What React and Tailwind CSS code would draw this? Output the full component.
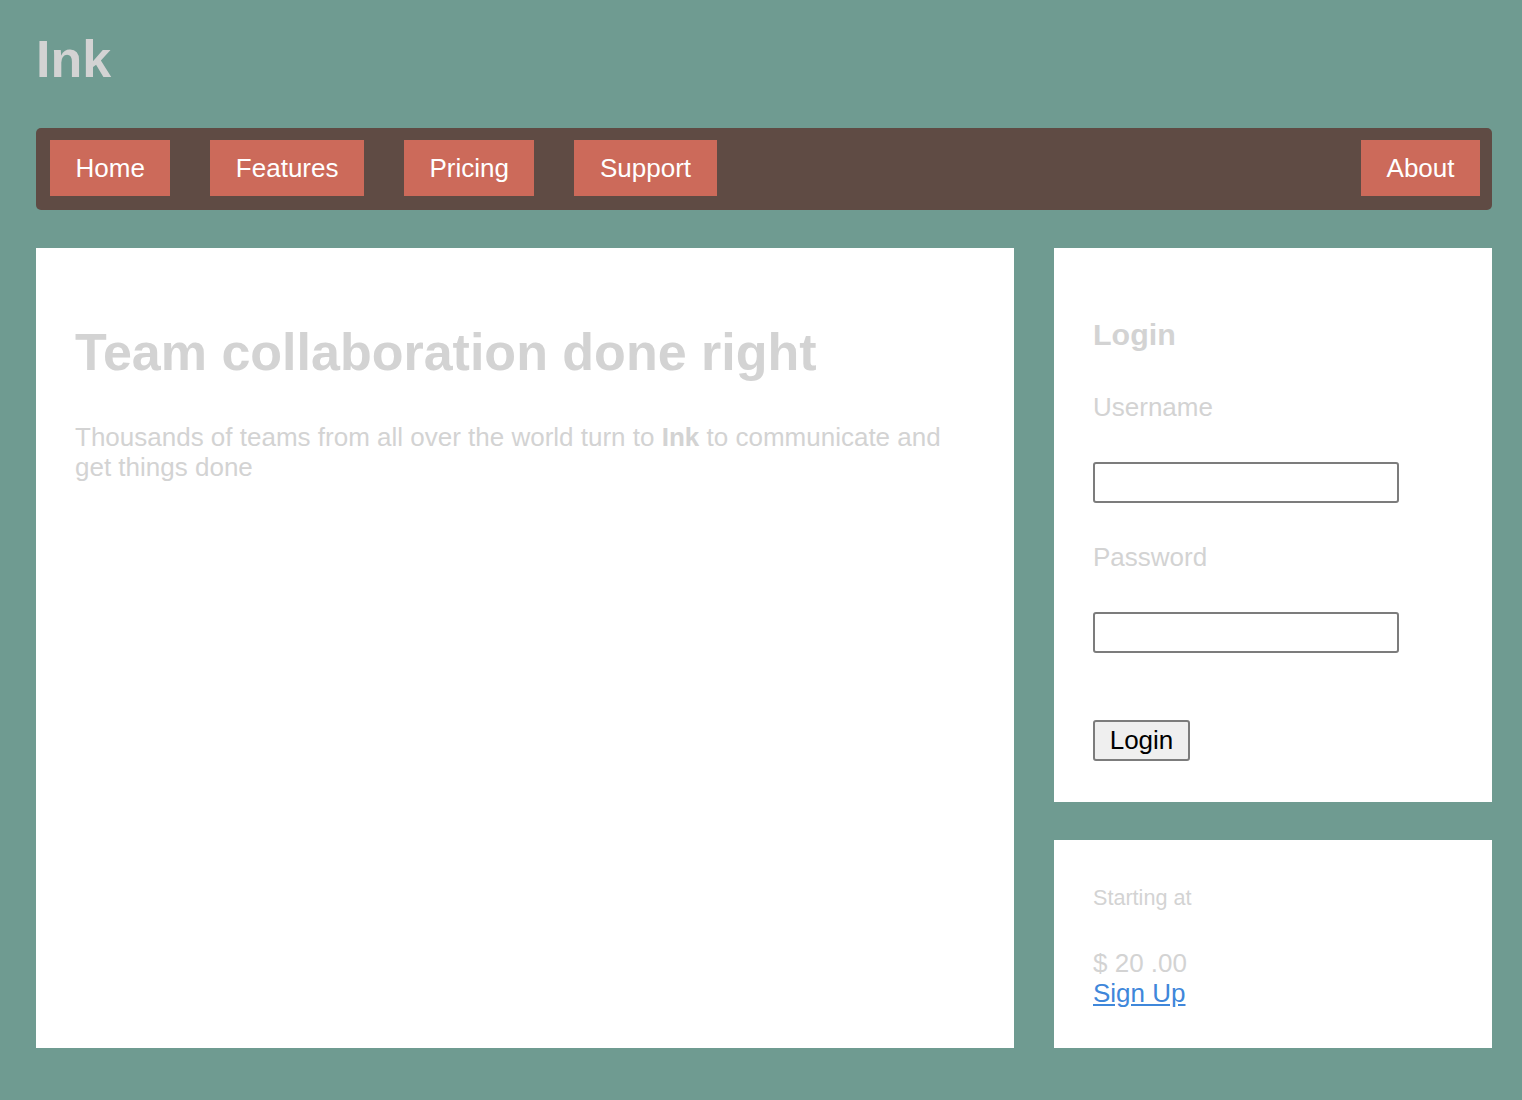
import React from "react";

const navItems = ["Home", "Features", "Pricing", "Support"];

function NavButton({ children }) {
  return (
    <a
      href="#"
      className="block h-[56px] bg-[#cc6a5a] px-[25.5px] text-[26px] leading-[56px] text-white"
    >
      {children}
    </a>
  );
}

export default function App() {
  return (
    <div className="min-h-[1100px] bg-[#6f9b91] pl-[36px] pr-[30px] font-['Liberation_Sans',Arial,sans-serif] text-[26px]">
      <h1 className="pt-[29px] text-[52px] font-bold leading-[60px] text-[#d3d3d3]">
        Ink
      </h1>

      <nav className="mt-[39px] flex h-[82px] items-start rounded-[5px] bg-[#5f4b44] pl-[14px] pr-[12px] pt-[12px]">
        <div className="flex gap-[40px]">
          {navItems.map((n) => (
            <NavButton key={n}>{n}</NavButton>
          ))}
        </div>
        <div className="ml-auto">
          <NavButton>About</NavButton>
        </div>
      </nav>

      <main className="mt-[38px] flex gap-[40px]">
        <section className="h-[800px] w-[978px] shrink-0 bg-white p-[39px]">
          <h2 className="mt-[35px] text-[52px] font-bold leading-[60px] text-[#d3d3d3]">
            Team collaboration done right
          </h2>
          <p className="mt-[40px] text-[26px] leading-[30px] text-[#d3d3d3]">
            Thousands of teams from all over the world turn to{" "}
            <b className="font-bold">Ink</b> to communicate and get things done
          </p>
        </section>

        <aside className="flex w-[438px] shrink-0 flex-col gap-[38px]">
          <div className="flex h-[554px] flex-col items-start bg-white px-[39px] pt-[39px]">
            <h3 className="mt-[30px] text-[30.4px] font-bold leading-[35px] text-[#d3d3d3]">
              Login
            </h3>
            <label className="mt-[39.6px] block text-[26px] leading-[30px] text-[#d3d3d3]">
              Username
            </label>
            <input
              type="text"
              className="mt-[40px] h-[41px] w-[306px] rounded-[3px] border-2 border-[#7c7c7c] bg-white"
            />
            <label className="mt-[39px] block text-[26px] leading-[30px] text-[#d3d3d3]">
              Password
            </label>
            <input
              type="password"
              className="mt-[40px] h-[41px] w-[306px] rounded-[3px] border-2 border-[#7c7c7c] bg-white"
            />
            <button className="mt-[67px] h-[41px] w-[97px] rounded-[3px] border-2 border-[#7c7c7c] bg-[#efefef] text-[26px] leading-[37px] text-black">
              Login
            </button>
          </div>

          <div className="h-[208px] bg-white px-[39px] pt-[45px]">
            <div className="text-[21.6px] leading-[25px] text-[#d3d3d3]">
              Starting at
            </div>
            <div className="mt-[38px] text-[26px] leading-[30px] text-[#d3d3d3]">
              $ 20 .00
            </div>
            <a
              href="#"
              className="block w-fit text-[26px] leading-[30px] text-[#3f87da] underline"
            >
              Sign Up
            </a>
          </div>
        </aside>
      </main>
    </div>
  );
}
